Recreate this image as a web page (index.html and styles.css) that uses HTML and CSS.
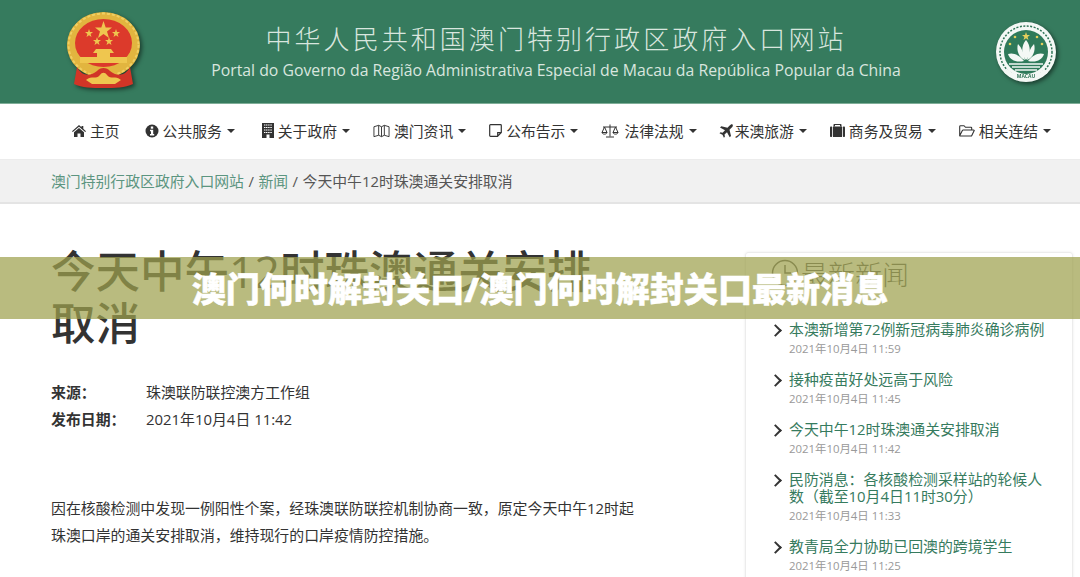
FILE: index.html
```html
<!DOCTYPE html>
<html lang="zh-CN">
<head>
    <meta charset="UTF-8">
    <meta name="viewport" content="width=device-width, initial-scale=1.0">
    <title>澳门何时解封关口</title>
    <link rel="stylesheet" href="styles.css">
</head>
<body>
    <header class="top-header">
        <svg class="emblem" viewBox="0 0 73 78" width="73" height="78">
            <ellipse cx="36.500" cy="33" rx="36.500" ry="33" fill="#e2b53f"/>
            <ellipse cx="36.500" cy="33" rx="35" ry="31.500" fill="none" stroke="#f0cf63" stroke-width="2" stroke-dasharray="3 2"/>
            <ellipse cx="36.500" cy="31" rx="28.500" ry="24" fill="#dc3a2b"/>
            <polygon points="36.500,9 38.700,15.500 45,15.500 40,19.500 42,26 36.500,22 31,26 33,19.500 28,15.500 34.300,15.500" fill="#efc64f"/>
            <polygon points="22,17 23,20 26,20 23.600,22 24.500,25 22,23.200 19.500,25 20.400,22 18,20 21,20" fill="#efc64f"/>
            <polygon points="49,17 50,20 53,20 50.600,22 51.500,25 49,23.200 46.500,25 47.400,22 45,20 48,20" fill="#efc64f"/>
            <polygon points="30,25 31,28 34,28 31.600,30 32.500,33 30,31.200 27.500,33 28.400,30 26,28 29,28" fill="#efc64f"/>
            <polygon points="42,25 43,28 46,28 43.600,30 44.500,33 42,31.200 39.500,33 40.400,30 38,28 41,28" fill="#efc64f"/>
            <path d="M26 41 L29 37 H44 L47 41 H43 V45 H30 V41 Z" fill="#efc64f"/>
            <path d="M13 45 H60 V51 H13 Z" fill="#efc64f"/>
            <path d="M10 55 C15 65 24 64 30 59 C33 55 40 55 43 59 C49 64 58 65 63 55 L66 72 C58 76 48 76 36.500 76 C25 76 15 76 7 72 Z" fill="#d13527"/>
            <path d="M19 68 C25 63 29 68 33 63 C35 60 38 60 40 63 C44 68 48 63 54 68 L48 72 H25 Z" fill="#efc64f"/>
        </svg>
        <div class="portal-name">
            <div class="portal-zh">中华人民共和国澳门特别行政区政府入口网站</div>
            <div class="portal-pt">Portal do Governo da Região Administrativa Especial de Macau da República Popular da China</div>
        </div>
        <svg class="emblem-macau" viewBox="0 0 61 61" width="61" height="61">
            <circle cx="30" cy="30" r="30" fill="#f4f8f5"/>
            <circle cx="30" cy="30" r="26" fill="none" stroke="#2f7456" stroke-width="1.500" stroke-dasharray="2 1.500"/>
            <circle cx="30" cy="30" r="22" fill="#2f7a5a"/>
            <polygon points="30,10 31,13 34,13 31.600,15 32.500,18 30,16.200 27.500,18 28.400,15 26,13 29,13" fill="#e5cf5c"/>
            <circle cx="19" cy="15" r="1.300" fill="#e5cf5c"/>
            <circle cx="41" cy="15" r="1.300" fill="#e5cf5c"/>
            <circle cx="14" cy="22" r="1.300" fill="#e5cf5c"/>
            <circle cx="46" cy="22" r="1.300" fill="#e5cf5c"/>
            <path d="M30 18 C35 24 35 32 30 38 C25 32 25 24 30 18 Z" fill="#f4f8f5"/>
            <path d="M22 22 C26 26 28 32 29 38 C23 36 20 28 22 22 Z" fill="#f4f8f5"/>
            <path d="M38 22 C34 26 32 32 31 38 C37 36 40 28 38 22 Z" fill="#f4f8f5"/>
            <path d="M12 32 C18 30 24 34 28 39 C20 41 14 38 12 32 Z" fill="#f4f8f5"/>
            <path d="M48 32 C42 30 36 34 32 39 C40 41 46 38 48 32 Z" fill="#f4f8f5"/>
            <path d="M13 42 H47 M16 45 H44 M19 48 H41" stroke="#f4f8f5" stroke-width="1.500"/>
            <path d="M12 47 C18 56 42 56 48 47 L52 50 C44 60 16 60 8 50 Z" fill="#f4f8f5"/>
            <text x="30" y="56" class="macau-word">MACAU</text>
        </svg>
    </header>

    <nav class="main-nav">
        <a class="nav-item item-home">
            <svg class="nav-icon" viewBox="0 0 14 12" width="14" height="12"><path d="M7 0 L9.500 2.200 V1 H11.300 V3.800 L14 6.200 L13.200 7 L7 1.700 L0.800 7 L0 6.200 Z M2 7.200 L7 3 L12 7.200 V12 H8.500 V8.500 H5.500 V12 H2 Z" fill="#333"/></svg>
            <span>主页</span>
        </a>
        <a class="nav-item item-spaced">
            <svg class="nav-icon" viewBox="0 0 14 14" width="14" height="14"><circle cx="7" cy="7" r="6.500" fill="#333"/><rect x="5.800" y="2.500" width="2.400" height="2.200" fill="#fff"/><path d="M5 5.800 H8.200 V10 H9.200 V11.500 H5 V10 H6 V7.200 H5 Z" fill="#fff"/></svg>
            <span>公共服务</span><span class="caret"></span>
        </a>
        <a class="nav-item">
            <svg class="nav-icon" viewBox="0 0 12 15" width="12" height="15"><rect width="12" height="15" fill="#333"/><path d="M2 2 H10 M2 4.500 H10 M2 7 H10 M2 9.500 H10" stroke="#fff" stroke-width="1" stroke-dasharray="1.300 0.500"/><rect x="4.500" y="11.500" width="3" height="3.500" fill="#fff"/></svg>
            <span>关于政府</span><span class="caret"></span>
        </a>
        <a class="nav-item">
            <svg class="nav-icon" viewBox="0 0 18 14" width="17" height="14"><path d="M1 2.500 L6 1 L9 2.500 L12 1 L17 2.500 V13 L12 11.500 L9 13 L6 11.500 L1 13 Z M6 1 V11.500 M9 2.500 V13 M12 1 V11.500" fill="none" stroke="#333" stroke-width="1"/></svg>
            <span>澳门资讯</span><span class="caret"></span>
        </a>
        <a class="nav-item">
            <svg class="nav-icon" viewBox="0 0 13 13" width="13" height="13"><path d="M1.500 0.700 H11.500 A0.800 0.800 0 0 1 12.300 1.500 V8.500 L8.500 12.300 H1.500 A0.800 0.800 0 0 1 0.700 11.500 V1.500 A0.800 0.800 0 0 1 1.500 0.700 Z M12 8.700 H8.700 V12" fill="none" stroke="#333" stroke-width="1.200"/></svg>
            <span>公布告示</span><span class="caret"></span>
        </a>
        <a class="nav-item item-wide">
            <svg class="nav-icon" viewBox="0 0 18 14" width="18" height="14"><path d="M9 0.500 V12.500 M5 13 H13 M2 3 H16 M3.500 3 L1 8.500 H6 Z M14.500 3 L12 8.500 H17 Z M1 8.500 C1.500 10.700 5.500 10.700 6 8.500 M12 8.500 C12.500 10.700 16.500 10.700 17 8.500" fill="none" stroke="#333" stroke-width="1"/></svg>
            <span>法律法规</span><span class="caret"></span>
        </a>
        <a class="nav-item item-tight">
            <svg class="nav-icon" viewBox="0 0 14 14" width="14" height="14"><path d="M13.500 0.500 C14.300 1.300 13.700 2.700 12.500 3.800 L10.500 5.800 L12 12 L10.700 13.300 L8 8.200 L5.500 10.600 L5.900 12.700 L4.900 13.700 L3.500 10.700 L0.500 9.300 L1.500 8.300 L3.600 8.700 L6 6.200 L1 3.500 L2.300 2.200 L8.500 3.700 L10.400 1.700 C11.500 0.500 12.800 -0.200 13.500 0.500 Z" fill="#333"/></svg>
            <span>来澳旅游</span><span class="caret"></span>
        </a>
        <a class="nav-item">
            <svg class="nav-icon" viewBox="0 0 15 13" width="15" height="13"><path d="M5 2.500 V1 H10 V2.500 H11.500 V0.800 Q11.500 0 10.700 0 H4.300 Q3.500 0 3.500 0.800 V2.500 Z" fill="#333"/><rect x="3" y="2.500" width="9" height="10.500" fill="#333"/><rect y="2.500" width="2.200" height="10.500" rx="0.800" fill="#333"/><rect x="12.800" y="2.500" width="2.200" height="10.500" rx="0.800" fill="#333"/></svg>
            <span>商务及贸易</span><span class="caret"></span>
        </a>
        <a class="nav-item">
            <svg class="nav-icon" viewBox="0 0 16 12" width="16" height="12"><path d="M0.700 10.800 V1.500 Q0.700 0.700 1.500 0.700 H5 L6.500 2.300 H12 Q12.700 2.300 12.700 3 V5 M0.700 10.800 L3.500 5.300 Q3.700 5 4.100 5 H14.600 Q15.500 5 15.100 5.800 L12.800 10.500 Q12.600 11 12 11 H1 Z" fill="none" stroke="#333" stroke-width="1.100"/></svg>
            <span>相关连结</span><span class="caret"></span>
        </a>
    </nav>

    <div class="breadcrumb">
        <a>澳门特别行政区政府入口网站</a><span class="sep">/</span><a>新闻</a><span class="sep">/</span>今天中午12时珠澳通关安排取消
    </div>

    <main class="page-body">
        <article class="article">
            <h1>今天中午12时珠澳通关安排取消</h1>
            <dl class="meta">
                <dt>来源：</dt><dd>珠澳联防联控澳方工作组</dd>
                <dt>发布日期：</dt><dd>2021年10月4日 11:42</dd>
            </dl>
            <p>因在核酸检测中发现一例阳性个案，经珠澳联防联控机制协商一致，原定今天中午12时起珠澳口岸的通关安排取消，维持现行的口岸疫情防控措施。</p>
        </article>

        <aside class="side-card">
            <h2>
                <svg viewBox="0 0 28 28" width="28" height="28"><circle cx="14" cy="14" r="12.500" fill="none" stroke="#555" stroke-width="1.500"/><path d="M14 6 V14 H20" fill="none" stroke="#555" stroke-width="1.500"/></svg>
                最新新闻
            </h2>
            <ul class="news-list">
                <li><a>本澳新增第72例新冠病毒肺炎确诊病例</a><time>2021年10月4日 11:59</time></li>
                <li><a>接种疫苗好处远高于风险</a><time>2021年10月4日 11:45</time></li>
                <li><a>今天中午12时珠澳通关安排取消</a><time>2021年10月4日 11:42</time></li>
                <li><a>民防消息：各核酸检测采样站的轮候人数（截至10月4日11时30分）</a><time>2021年10月4日 11:33</time></li>
                <li><a>教青局全力协助已回澳的跨境学生</a><time>2021年10月4日 11:25</time></li>
            </ul>
        </aside>
    </main>

    <div class="title-banner">澳门何时解封关口/澳门何时解封关口最新消息</div>
</body>
</html>
```

FILE: styles.css
```css
* {
    box-sizing: border-box;
}

html, body {
    height: 577px;
    overflow: hidden;
}

body {
    margin: 0;
    position: relative;
    background-color: #fff;
    color: #333;
    font-family: "Open Sans", "Noto Sans CJK SC", sans-serif;
    font-size: 14.900px;
}

.top-header {
    height: 104px;
    display: flex;
    align-items: flex-start;
    padding-left: 67px;
    background-color: #367b5e;
    border-bottom: 1px solid #7fae98;
}

.emblem {
    margin-top: 12px;
    flex-shrink: 0;
    filter: drop-shadow(2px 2px 2px rgba(0, 0, 0, 0.5));
}

.portal-name {
    width: 690px;
    margin-left: 71px;
    padding-top: 21px;
    text-align: center;
    color: #d9e6df;
}

.portal-zh {
    font-size: 26px;
    line-height: 36px;
    font-weight: 300;
    letter-spacing: 3.050px;
}

.portal-pt {
    margin-top: 3px;
    font-size: 15.800px;
    line-height: 20px;
    white-space: nowrap;
}

.emblem-macau {
    margin: 22px 0 0 95px;
    flex-shrink: 0;
    filter: drop-shadow(2px 2px 2px rgba(0, 0, 0, 0.5));
}

.macau-word {
    font-size: 5px;
    font-weight: 700;
    fill: #2f7456;
    text-anchor: middle;
}

.main-nav {
    height: 55px;
    display: flex;
    align-items: center;
    gap: 23px;
    padding: 0 0 2px 72px;
    font-size: 14.800px;
    white-space: nowrap;
}

.nav-item {
    display: flex;
    align-items: center;
    color: #333;
}

.nav-icon {
    margin-right: 4px;
    flex-shrink: 0;
}

.item-home {
    margin-right: 2px;
}

.item-spaced {
    margin-right: 4px;
}

.item-tight .nav-icon {
    margin-right: 2px;
}

.item-wide {
    margin-right: -1px;
}

.item-wide .nav-icon {
    margin-right: 5px;
}

.caret {
    width: 0;
    height: 0;
    margin-left: 5px;
    border-top: 4px solid #333;
    border-left: 4px solid transparent;
    border-right: 4px solid transparent;
}

.breadcrumb {
    height: 45px;
    padding-left: 51px;
    font-size: 14.850px;
    line-height: 42px;
    background-color: #f1f1f1;
    border-top: 1px solid #ececec;
    border-bottom: 2px solid #e4e4e4;
    color: #555;
}

.breadcrumb a {
    color: #5c9580;
}

.sep {
    margin: 0 4.500px;
}

.page-body {
    display: flex;
    align-items: flex-start;
    justify-content: space-between;
    padding: 41px 7px 0 51px;
}

.article {
    width: 590px;
}

.article h1 {
    width: 560px;
    margin: 0;
    font-size: 44.500px;
    line-height: 52px;
    font-weight: 500;
    color: #333;
}

.meta {
    display: grid;
    grid-template-columns: 95px 1fr;
    row-gap: 7px;
    margin: 33px 0 0;
    line-height: 20px;
}

.meta dt {
    font-weight: 700;
}

.meta dd {
    margin: 0;
}

.article p {
    width: 590px;
    margin: 66px 0 0;
    line-height: 27px;
}

.side-card {
    width: 328px;
    height: 340px;
    margin-top: 7px;
    padding: 2px 24px 0 25px;
    border: 1px solid #ececec;
    border-radius: 3px;
    box-shadow: 0 0 3px rgba(0, 0, 0, 0.08);
}

.side-card h2 {
    display: flex;
    align-items: center;
    gap: 2px;
    height: 36px;
    margin: 0 0 30px;
    font-size: 27px;
    font-weight: 300;
    color: #555;
}

.news-list {
    margin: 0;
    padding: 0;
    list-style: none;
}

.news-list li {
    position: relative;
    padding-left: 18px;
    margin-bottom: 14px;
}

.news-list li::before {
    content: "";
    position: absolute;
    left: 0;
    top: 5px;
    width: 7px;
    height: 7px;
    border-top: 2.500px solid #333;
    border-right: 2.500px solid #333;
    transform: rotate(45deg);
}

.news-list a {
    display: block;
    color: #367b5e;
    line-height: 17px;
}

.news-list time {
    display: block;
    margin-top: 2px;
    font-size: 11.400px;
    line-height: 17px;
    color: #999;
}

.title-banner {
    position: absolute;
    left: 0;
    right: 0;
    top: 257px;
    height: 62px;
    padding-top: 2px;
    text-align: center;
    line-height: 60px;
    font-size: 34.100px;
    font-weight: 900;
    color: #fff;
    -webkit-text-stroke: 0.500px #fff;
    white-space: nowrap;
    background-color: rgba(158, 161, 78, 0.72);
}
```
